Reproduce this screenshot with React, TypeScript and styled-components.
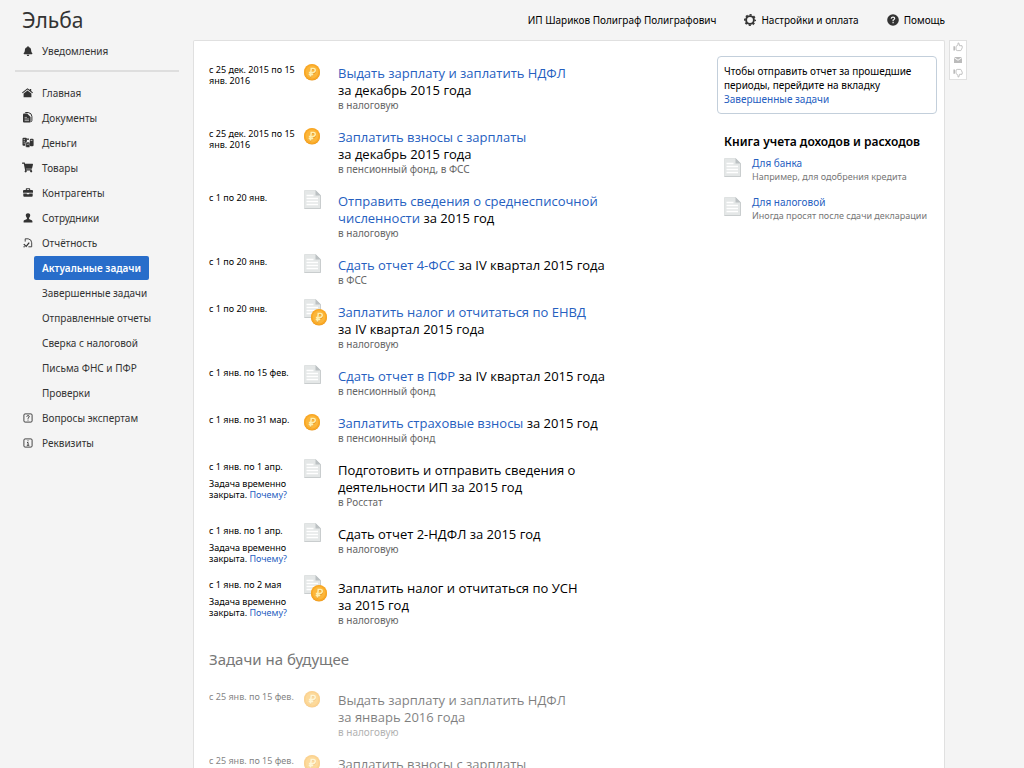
import React from "react";
import styled, { createGlobalStyle, css } from "styled-components";
import { FaBell, FaShoppingCart } from "react-icons/fa";

const GlobalStyle = createGlobalStyle`
  html { scrollbar-width: none; }
  body {
    margin: 0;
    background: #f4f4f4;
    color: #000;
    font-family: "Noto Sans", "Open Sans", sans-serif;
    font-size: 10px;
    line-height: 14px;
  }
  a { color: #2660bf; text-decoration: none; }
  ul { list-style: none; margin: 0; padding: 0; }
  h1, h2, p { margin: 0; font-weight: 400; }
  svg { display: block; flex: none; }
`;

/* ---------- page frame ---------- */

const Page = styled.div`
  display: grid;
  grid-template-columns: 193px minmax(0, 1fr) 75px;
  min-height: 100vh;
`;

const Sidebar = styled.aside`
  padding: 0 14px 0 15px;
`;

const Logo = styled.h1`
  height: 38px;
  padding-left: 7px;
  font-size: 21px;
  line-height: 40px;
  color: #333;
`;

const Column = styled.div`
  display: flex;
  flex-direction: column;
`;

const Header = styled.header`
  display: flex;
  justify-content: flex-end;
  align-items: center;
  gap: 28px;
  height: 40px;
  padding-right: 4px;
`;

const HeaderLink = styled.a`
  display: flex;
  align-items: center;
  gap: 5px;
  color: #000;
  white-space: nowrap;
`;

const Panel = styled.main`
  flex: 1;
  display: flex;
  justify-content: space-between;
  align-items: flex-start;
  padding: 15px 7px 0 15px;
  margin-right: 4px;
  background: #fff;
  border: 1px solid #e0e0e0;
  border-bottom: 0;
  border-radius: 2px 2px 0 0;
`;

/* ---------- sidebar menu ---------- */

const Menu = styled.ul<{ $divided?: boolean }>`
  ${(p) =>
    p.$divided &&
    css`
      margin-top: 7px;
      padding-top: 8px;
      border-top: 2px solid #dedede;
    `}
`;

const MenuLink = styled.a`
  display: flex;
  align-items: center;
  height: 25px;
  color: #333;
  white-space: nowrap;
`;

const MenuIcon = styled.span`
  display: flex;
  align-items: center;
  justify-content: center;
  width: 25px;
  margin-right: 2px;
  color: #333;
`;

const SubItem = styled.li`
  display: flex;
  align-items: center;
  height: 25px;
  padding-left: 19px;
`;

const SubLink = styled.a<{ $active?: boolean }>`
  padding: 5px 8px;
  border-radius: 2px;
  color: ${(p) => (p.$active ? "#fff" : "#333")};
  background: ${(p) => (p.$active ? "#286dca" : "transparent")};
  font-weight: ${(p) => (p.$active ? 600 : 400)};
  white-space: nowrap;
`;

/* ---------- task list ---------- */

const Tasks = styled.section`
  padding-top: 4px;
`;

const Task = styled.li<{ $faded?: boolean }>`
  display: grid;
  grid-template-columns: 95px 34px minmax(0, 1fr);
  padding-bottom: 10px;
  opacity: ${(p) => (p.$faded ? 0.5 : 1)};
`;

const TaskDates = styled.div`
  padding: 4px 0 1px;
  font-size: 9px;
  line-height: 11px;
  white-space: nowrap;
`;

const TaskNote = styled.p`
  margin-top: 6px;
`;

const TaskIcon = styled.div<{ $kind: Kind }>`
  padding-top: ${(p) => ({ coin: 4, doc: 2, both: 0 })[p.$kind]}px;
`;

const TaskBody = styled.div`
  padding: 5px 0 2px;
  white-space: nowrap;
`;

const TaskTitle = styled.p`
  font-family: "Open Sans", "Noto Sans", sans-serif;
  font-size: 13px;
  line-height: 17px;
`;

const TaskTarget = styled.p`
  line-height: 13px;
  color: #666;
`;

const FutureHeading = styled.h2`
  padding: 10px 0 18px;
  font-size: 15px;
  line-height: 20px;
  color: #777;
`;

/* ---------- right column ---------- */

const Extras = styled.aside`
  flex: none;
  width: 220px;
`;

const Tip = styled.p`
  padding: 7px 6px;
  border: 1px solid #c3cfdb;
  border-radius: 4px;
  white-space: nowrap;
`;

const BookHeading = styled.h2`
  margin: 20px 0 6px 7px;
  font-size: 12px;
  line-height: 16px;
  font-weight: 600;
  white-space: nowrap;
`;

const Book = styled.li`
  display: flex;
  gap: 10px;
  height: 39px;
  padding-left: 7px;
  white-space: nowrap;
`;

const BookIcon = styled.span`
  padding-top: 2px;
`;

const BookNote = styled.p`
  font-size: 9px;
  color: #777;
`;

/* ---------- feedback strip ---------- */

const Feedback = styled.div`
  display: flex;
  flex-direction: column;
  width: 16px;
  height: 38px;
  margin-top: 40px;
  border: 1px solid #e0e0e0;
  background: #fff;
`;

const FeedbackButton = styled.button`
  flex: 1;
  display: flex;
  align-items: center;
  justify-content: center;
  padding: 0;
  border: 0;
  background: none;
  color: #bbb;
  cursor: pointer;
`;

/* ---------- icons ---------- */

const HomeIcon = () => (
  <svg width="11" height="10" viewBox="0 0 11 10" fill="currentColor">
    <path d="M5.5 0.2 L7.8 2 V0.9 H9.2 V3 L11 4.5 L10.3 5.3 L5.5 1.6 L0.7 5.3 L0 4.5 Z" />
    <path d="M5.5 2.6 L9.4 5.6 V9.2 H1.6 V5.6 Z" />
  </svg>
);

const DocsIcon = () => (
  <svg width="11" height="11" viewBox="0 0 11 11" fill="none" stroke="currentColor">
    <path d="M3 1 Q3.2 0.5 4 0.5 H6.2 Q9.9 1.2 9.9 4.4 V8.4 Q9.9 9.6 8.8 9.8" strokeWidth="1" />
    <path d="M1 2.6 Q1 1.6 2 1.6 H5.2 L8.6 5 V9.4 Q8.6 10.4 7.6 10.4 H2 Q1 10.4 1 9.4 Z" fill="currentColor" stroke="none" />
    <path d="M2.6 5.4 H5 M2.6 7 H7 M2.6 8.6 H7" stroke="#f4f4f4" strokeWidth="0.6" />
  </svg>
);

const MoneyIcon = () => (
  <svg width="12" height="11" viewBox="0 0 12 11" fill="currentColor">
    <rect x="0.5" y="0.7" width="4.4" height="8" rx="1" />
    <path d="M1.6 2.5 H3 M1.6 4.3 H3 M1.6 6.1 H3" stroke="#f4f4f4" strokeWidth="0.6" />
    <rect x="3.6" y="5" width="4.4" height="5.6" rx="1.4" stroke="#f4f4f4" strokeWidth="0.6" />
    <path d="M4.6 7 Q5.8 7.8 7 7" stroke="#f4f4f4" strokeWidth="0.6" fill="none" />
    <rect x="7.8" y="1.8" width="3.8" height="7.4" rx="1.2" />
    <path d="M8.6 3.4 H10.4" stroke="#f4f4f4" strokeWidth="0.7" />
    <circle cx="6" cy="2.2" r="0.9" />
  </svg>
);

const CaseIcon = () => (
  <svg width="10" height="9" viewBox="0 0 10 9" fill="currentColor">
    <path d="M2.8 2 V1 Q2.8 0.2 3.6 0.2 H6.4 Q7.2 0.2 7.2 1 V2 H6.1 V1.2 H3.9 V2 Z" />
    <path d="M1 1.9 H9 Q10 1.9 10 2.9 V4.8 H0 V2.9 Q0 1.9 1 1.9 Z" />
    <path d="M0.3 5.5 H3.8 V6.2 H6.2 V5.5 H9.7 V7.8 Q9.7 8.7 8.8 8.7 H1.2 Q0.3 8.7 0.3 7.8 Z" />
  </svg>
);

const PersonIcon = () => (
  <svg width="10" height="10" viewBox="0 0 10 10" fill="currentColor">
    <path d="M5 0.3 C6.7 0.3 7.4 1.4 7.2 2.7 C7 3.9 6 4.5 6 5.4 C6 6.9 9.3 6.6 9.4 8 V9.4 H0.6 V8 C0.7 6.6 4 6.9 4 5.4 C4 4.5 3 3.9 2.8 2.7 C2.6 1.4 3.3 0.3 5 0.3 Z" />
  </svg>
);

const ReportIcon = () => (
  <svg width="10" height="10" viewBox="0 0 10 10" fill="none" stroke="currentColor" strokeWidth="0.9">
    <path d="M2.2 3.6 V0.8 H5.2 Q8.7 1.4 8.7 4.8 V8.8 H5.4" />
    <path d="M0.8 6.1 L3.2 8.4 L6.2 4.6" strokeWidth="1.3" />
    <path d="M0.4 8.8 H2" />
  </svg>
);

const QuestionIcon = () => (
  <svg width="10" height="10" viewBox="0 0 10 10" fill="none" stroke="currentColor">
    <rect x="0.9" y="0.9" width="8.2" height="8.2" rx="1.2" strokeWidth="0.9" />
    <path d="M3.7 3.7 Q3.9 2.6 5 2.6 Q6.3 2.6 6.3 3.7 Q6.3 4.4 5 5.1 V5.8 M5 6.6 V7.6" strokeWidth="0.9" />
  </svg>
);

const InfoIcon = () => (
  <svg width="10" height="10" viewBox="0 0 10 10" fill="none" stroke="currentColor">
    <rect x="0.9" y="0.9" width="8.2" height="8.2" rx="1.2" strokeWidth="0.9" />
    <path d="M5 2.3 V3.3 M4 4.5 H5.1 V7.2 M3.8 7.3 H6.3" strokeWidth="0.9" />
  </svg>
);

const GearIcon = () => (
  <svg width="12" height="12" viewBox="0 0 12 12" fill="none" stroke="#333">
    <circle cx="6" cy="6" r="3.9" strokeWidth="1.9" />
    <circle cx="6" cy="6" r="5.2" strokeWidth="1.6" strokeDasharray="2.1 1.984" strokeDashoffset="1.05" />
  </svg>
);

const HelpIcon = () => (
  <svg width="12" height="12" viewBox="0 0 12 12">
    <circle cx="6" cy="6" r="5.8" fill="#333" />
    <path d="M4.2 4.6 Q4.4 3.1 6 3.1 Q7.7 3.1 7.7 4.6 Q7.7 5.4 6.1 6.2 V7.2 M6.1 8 V9.3" fill="none" stroke="#f4f4f4" strokeWidth="1.2" />
  </svg>
);

const ThumbIcon = ({ down }: { down?: boolean }) => (
  <svg width="10" height="10" viewBox="0 0 10 10" fill="none" stroke="currentColor" strokeWidth="0.9">
    <g transform={down ? "matrix(1 0 0 -1 0 10)" : undefined}>
      <path d="M3 4.5 L5 2.8 V0.9 Q6.6 0.6 6.4 3.7 H9 Q9.8 5.4 8.6 7.2 L7.8 8.6 H4.2 L3 7.9 Z" />
      <path d="M1.2 4.2 V8.6" strokeWidth="1.6" />
    </g>
  </svg>
);

const MailIcon = () => (
  <svg width="8" height="6" viewBox="0 0 8 6" fill="currentColor">
    <path d="M0 0 H8 L4 2.8 Z" />
    <path d="M0 1 L4 3.8 L8 1 V6 H0 Z" />
  </svg>
);

const Sheet = () => (
  <g>
    <path d="M0.5 0.5 H11.5 L16.5 5.5 V18.5 H0.5 Z" fill="#e4e7e7" stroke="#dfe2e2" />
    <path d="M0.5 18.5 H16.5 V5.5" fill="none" stroke="#c9cdce" />
    <path d="M11.5 0 L17 5.5 H11.5 Z" fill="#bcc1c3" />
    <path d="M2.5 5.5 H9.5 M2.5 8.5 H14 M2.5 11.5 H14 M2.5 14.5 H14" stroke="#fff" strokeWidth="1.4" />
  </g>
);

const Coin = () => (
  <g>
    <circle cx="8" cy="8.5" r="8" fill="#e8951c" />
    <circle cx="8" cy="8" r="8" fill="#f9a825" />
    <circle cx="8" cy="8" r="6.4" fill="#fcb63a" />
    <path d="M6.4 12.6 L7.2 4.5 H9.3 Q11.4 4.6 11.2 6.5 Q10.9 8.6 8.8 8.6 H4.8 M4.6 10.6 H9.2" fill="none" stroke="#de8d18" strokeWidth="1.6" transform="translate(0 0.7)" />
    <path d="M6.4 12.6 L7.2 4.5 H9.3 Q11.4 4.6 11.2 6.5 Q10.9 8.6 8.8 8.6 H4.8 M4.6 10.6 H9.2" fill="none" stroke="#fff0b0" strokeWidth="1.6" />
  </g>
);

type Kind = "coin" | "doc" | "both";

const KindIcon = ({ kind }: { kind: Kind }) => {
  if (kind === "coin")
    return (
      <svg width="17" height="17" viewBox="0 0 17 17"><Coin /></svg>
    );
  if (kind === "doc")
    return (
      <svg width="18" height="20" viewBox="0 0 18 20"><Sheet /></svg>
    );
  return (
    <svg width="24" height="27" viewBox="0 0 24 27">
      <Sheet />
      <g transform="translate(7 10)"><Coin /></g>
    </svg>
  );
};

/* ---------- data ---------- */

type TaskData = {
  dates: string[];
  closed?: boolean;
  kind: Kind;
  title: React.ReactNode;
  target?: string;
};

const current: TaskData[] = [
  { dates: ["с 25 дек. 2015 по 15", "янв. 2016"], kind: "coin", title: <><a href="#task">Выдать зарплату и заплатить НДФЛ</a><br />за декабрь 2015 года</>, target: "в налоговую" },
  { dates: ["с 25 дек. 2015 по 15", "янв. 2016"], kind: "coin", title: <><a href="#task">Заплатить взносы с зарплаты</a><br />за декабрь 2015 года</>, target: "в пенсионный фонд, в ФСС" },
  { dates: ["с 1 по 20 янв."], kind: "doc", title: <><a href="#task">Отправить сведения о среднесписочной<br />численности</a> за 2015 год</>, target: "в налоговую" },
  { dates: ["с 1 по 20 янв."], kind: "doc", title: <><a href="#task">Сдать отчет 4-ФСС</a> за IV квартал 2015 года</>, target: "в ФСС" },
  { dates: ["с 1 по 20 янв."], kind: "both", title: <><a href="#task">Заплатить налог и отчитаться по ЕНВД</a><br />за IV квартал 2015 года</>, target: "в налоговую" },
  { dates: ["с 1 янв. по 15 фев."], kind: "doc", title: <><a href="#task">Сдать отчет в ПФР</a> за IV квартал 2015 года</>, target: "в пенсионный фонд" },
  { dates: ["с 1 янв. по 31 мар."], kind: "coin", title: <><a href="#task">Заплатить страховые взносы</a> за 2015 год</>, target: "в пенсионный фонд" },
  { dates: ["с 1 янв. по 1 апр."], closed: true, kind: "doc", title: <>Подготовить и отправить сведения о<br />деятельности ИП за 2015 год</>, target: "в Росстат" },
  { dates: ["с 1 янв. по 1 апр."], closed: true, kind: "doc", title: "Сдать отчет 2-НДФЛ за 2015 год", target: "в налоговую" },
  { dates: ["с 1 янв. по 2 мая"], closed: true, kind: "both", title: <>Заплатить налог и отчитаться по УСН<br />за 2015 год</>, target: "в налоговую" },
];

const future: TaskData[] = [
  { dates: ["с 25 янв. по 15 фев."], kind: "coin", title: <>Выдать зарплату и заплатить НДФЛ<br />за январь 2016 года</>, target: "в налоговую" },
  { dates: ["с 25 янв. по 15 фев."], kind: "coin", title: "Заплатить взносы с зарплаты" },
];

const TaskRow = ({ task, faded }: { task: TaskData; faded?: boolean }) => (
  <Task $faded={faded}>
    <TaskDates>
      {task.dates.map((line) => <div key={line}>{line}</div>)}
      {task.closed && (
        <TaskNote>
          Задача временно<br />закрыта. <a href="#why">Почему?</a>
        </TaskNote>
      )}
    </TaskDates>
    <TaskIcon $kind={task.kind}><KindIcon kind={task.kind} /></TaskIcon>
    <TaskBody>
      <TaskTitle>{task.title}</TaskTitle>
      {task.target && <TaskTarget>{task.target}</TaskTarget>}
    </TaskBody>
  </Task>
);

const NavItem = ({ icon, children }: { icon: React.ReactNode; children: string }) => (
  <li>
    <MenuLink href="#section"><MenuIcon>{icon}</MenuIcon>{children}</MenuLink>
  </li>
);

const reportPages = ["Актуальные задачи", "Завершенные задачи", "Отправленные отчеты", "Сверка с налоговой", "Письма ФНС и ПФР", "Проверки"];

export default function App() {
  return (
    <>
      <GlobalStyle />
      <Page>
        <Sidebar>
          <Logo>Эльба</Logo>
          <nav>
            <Menu>
              <NavItem icon={<FaBell size={10} />}>Уведомления</NavItem>
            </Menu>
            <Menu $divided>
              <NavItem icon={<HomeIcon />}>Главная</NavItem>
              <NavItem icon={<DocsIcon />}>Документы</NavItem>
              <NavItem icon={<MoneyIcon />}>Деньги</NavItem>
              <NavItem icon={<FaShoppingCart size={11} />}>Товары</NavItem>
              <NavItem icon={<CaseIcon />}>Контрагенты</NavItem>
              <NavItem icon={<PersonIcon />}>Сотрудники</NavItem>
              <NavItem icon={<ReportIcon />}>Отчётность</NavItem>
              {reportPages.map((name, i) => (
                <SubItem key={name}><SubLink href="#report" $active={i === 0}>{name}</SubLink></SubItem>
              ))}
              <NavItem icon={<QuestionIcon />}>Вопросы экспертам</NavItem>
              <NavItem icon={<InfoIcon />}>Реквизиты</NavItem>
            </Menu>
          </nav>
        </Sidebar>

        <Column>
          <Header>
            <HeaderLink href="#company">ИП Шариков Полиграф Полиграфович</HeaderLink>
            <HeaderLink href="#settings"><GearIcon />Настройки и оплата</HeaderLink>
            <HeaderLink href="#help"><HelpIcon />Помощь</HeaderLink>
          </Header>
          <Panel>
            <Tasks>
              <ul>{current.map((task, i) => <TaskRow key={i} task={task} />)}</ul>
              <FutureHeading>Задачи на будущее</FutureHeading>
              <ul>{future.map((task, i) => <TaskRow key={i} task={task} faded />)}</ul>
            </Tasks>
            <Extras>
              <Tip>
                Чтобы отправить отчет за прошедшие<br />периоды, перейдите на вкладку<br />
                <a href="#done">Завершенные задачи</a>
              </Tip>
              <BookHeading>Книга учета доходов и расходов</BookHeading>
              <ul>
                <Book>
                  <BookIcon><KindIcon kind="doc" /></BookIcon>
                  <div><a href="#bank">Для банка</a><BookNote>Например, для одобрения кредита</BookNote></div>
                </Book>
                <Book>
                  <BookIcon><KindIcon kind="doc" /></BookIcon>
                  <div><a href="#tax">Для налоговой</a><BookNote>Иногда просят после сдачи декларации</BookNote></div>
                </Book>
              </ul>
            </Extras>
          </Panel>
        </Column>

        <Feedback>
          <FeedbackButton aria-label="Нравится"><ThumbIcon /></FeedbackButton>
          <FeedbackButton aria-label="Написать"><MailIcon /></FeedbackButton>
          <FeedbackButton aria-label="Не нравится"><ThumbIcon down /></FeedbackButton>
        </Feedback>
      </Page>
    </>
  );
}
